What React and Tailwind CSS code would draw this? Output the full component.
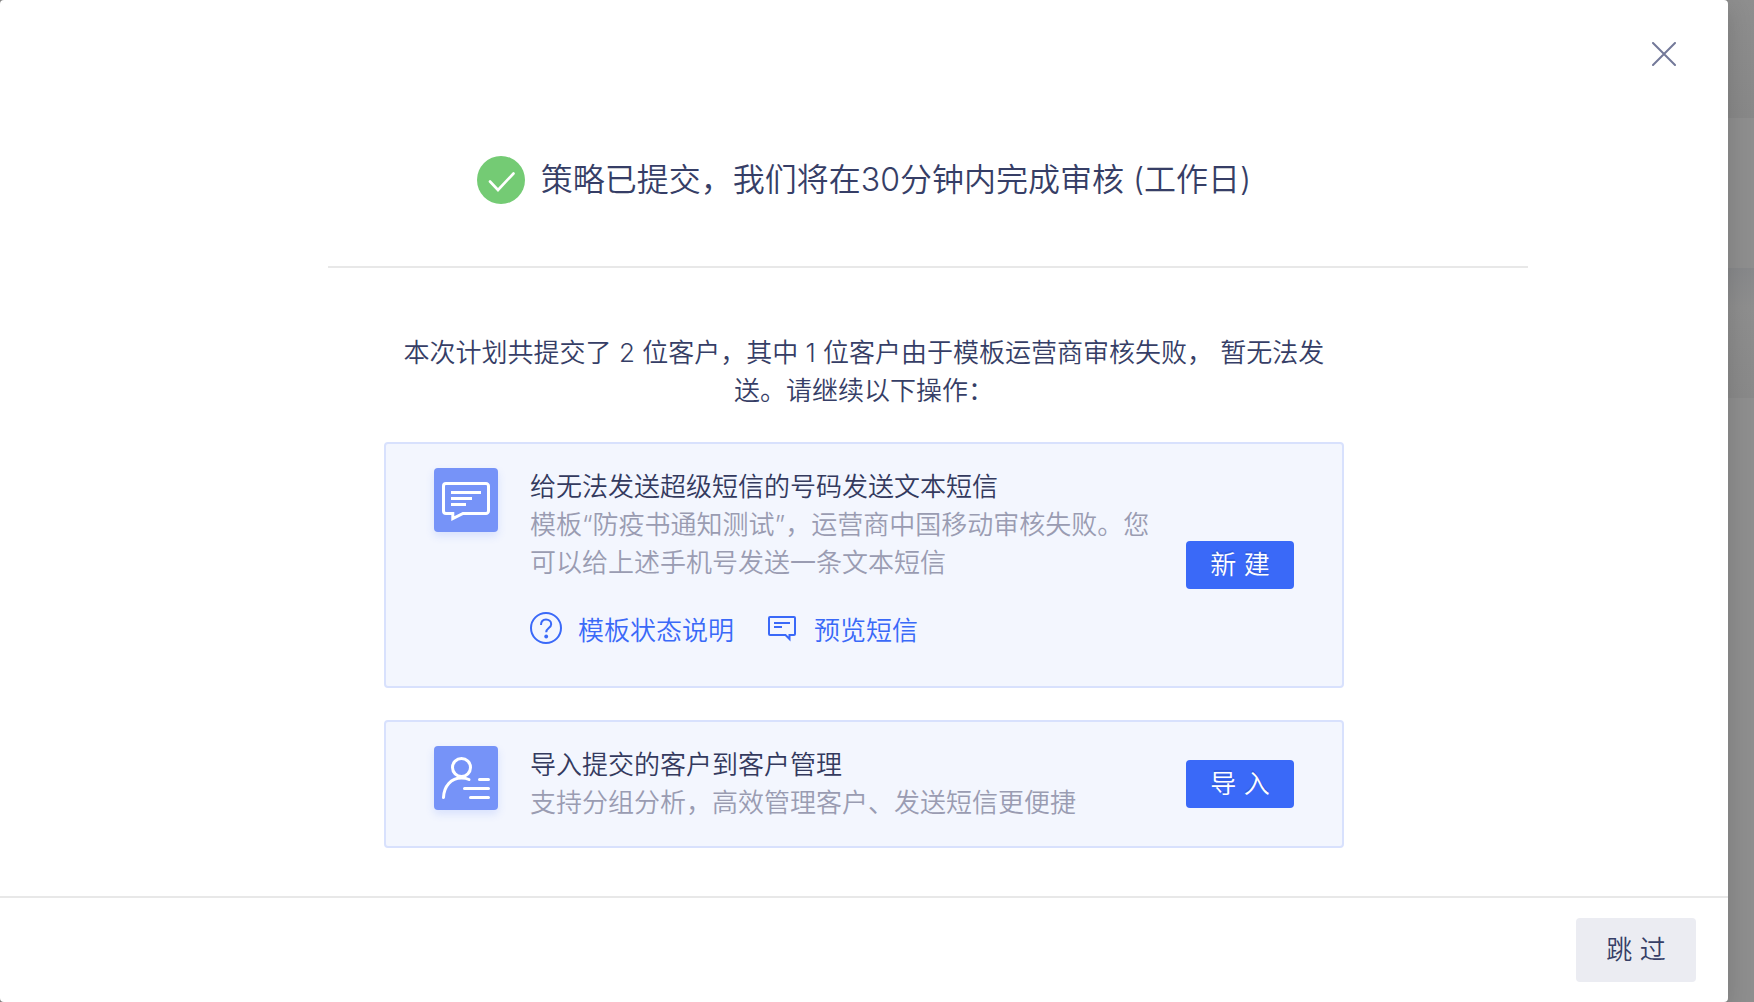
import React from 'react';

const CloseIcon = () => (
  <svg width="24" height="24" viewBox="0 0 24 24" fill="none" stroke="currentColor" strokeWidth="2" strokeLinecap="round">
    <path d="M1 1l22 22M23 1L1 23" />
  </svg>
);

const SuccessIcon = () => (
  <svg width="48" height="48" viewBox="0 0 48 48" fill="none" className="shrink-0">
    <circle cx="24" cy="24" r="24" fill="#74cb74" />
    <path d="M13 25.5l8 8.5L36.5 17.5" stroke="#fff" strokeWidth="2.6" strokeLinecap="round" />
  </svg>
);

const MessageIcon = () => (
  <svg width="64" height="64" viewBox="0 0 64 64" fill="none" stroke="#fff" strokeWidth="3">
    <path d="M12 15.5h40a2.5 2.5 0 0 1 2.5 2.5v25a2.5 2.5 0 0 1-2.5 2.5H29L18.8 50.5V45.5H12A2.5 2.5 0 0 1 9.5 43V18A2.5 2.5 0 0 1 12 15.5z" />
    <path d="M17 24.5h30M17 30.5h21M17 36.5h15" />
  </svg>
);

const CustomerIcon = () => (
  <svg width="64" height="64" viewBox="0 0 64 64" fill="none" stroke="#fff" strokeWidth="3" strokeLinecap="round">
    <circle cx="27.5" cy="21.5" r="9" />
    <path d="M9.5 51.5C10 40 17 32 27.5 32q4.500 0 7.500 1.500" />
    <path d="M45.5 33.5h9M30.5 42.5h24M36.5 51.5h18" />
  </svg>
);

const HelpIcon = () => (
  <svg width="32" height="32" viewBox="0 0 32 32" fill="none" stroke="currentColor" strokeWidth="2">
    <circle cx="16" cy="16" r="15" />
    <path d="M11 13c0-3.600 2.200-5.500 5-5.500s5.200 1.800 5.200 4.700c0 3.800-5 4-5 8" />
    <circle cx="16.200" cy="24.500" r="1.900" fill="currentColor" stroke="none" />
  </svg>
);

const PreviewIcon = () => (
  <svg width="28" height="26" viewBox="0 0 28 26" fill="none" stroke="currentColor" strokeWidth="2">
    <path d="M2 1h24a1 1 0 0 1 1 1v16a1 1 0 0 1-1 1h-4.500v4L17.500 19H2a1 1 0 0 1-1-1V2a1 1 0 0 1 1-1z" />
    <path d="M6 7h16M6 11h8" />
  </svg>
);

const ActionCard = ({ icon, title, description, action, children }) => (
  <section className="flex items-center gap-6 rounded border-2 border-[#d8e1fd] bg-[#f3f6fe] px-12 py-6">
    <div className="flex flex-1 items-start gap-8">
      <div className="shrink-0 rounded bg-[#7693f8] shadow-[0_4px_8px_rgba(58,105,248,0.15)]">{icon}</div>
      <div className="flex-1">
        <h2 className="text-[#343a5e]">{title}</h2>
        <p className="text-[#9a9cb2]">{description}</p>
        {children}
      </div>
    </div>
    <button
      type="button"
      className="h-12 w-[108px] shrink-0 rounded bg-[#3a69f8] text-white [text-shadow:0_-2px_0_rgba(0,0,0,0.12)]"
    >
      {action}
    </button>
  </section>
);

export default function App() {
  return (
    <div className="flex min-h-screen bg-[#868686] font-['Inter','Noto_Sans_CJK_SC',sans-serif] text-[26px] leading-[38px] font-[350] text-[#363e66]">
      <div role="dialog" aria-labelledby="dialog-title" className="relative z-10 flex flex-1 flex-col rounded bg-white shadow-[0_8px_24px_rgba(0,0,0,0.15)]">
        <button type="button" aria-label="关闭" className="absolute right-[52px] top-[42px] text-[#737999]">
          <CloseIcon />
        </button>

        <main className="flex-1 pb-12 pt-[156px]">
          <div className="flex items-center justify-center gap-4">
            <SuccessIcon />
            <h1 id="dialog-title" className="text-[32px] leading-[48px]">
              策略已提交，我们将在30分钟内完成审核 (工作日)
            </h1>
          </div>

          <hr className="ml-[328px] mr-[200px] mt-[62px] border-t-2 border-[#e8e8e8]" />

          <div className="mx-auto mt-[66px] flex max-w-[960px] flex-col gap-8">
            <p className="px-4 text-center">
              本次计划共提交了 2 位客户，其中 1 位客户由于模板运营商审核失败， 暂无法发送。请继续以下操作：
            </p>

            <ActionCard
              icon={<MessageIcon />}
              title="给无法发送超级短信的号码发送文本短信"
              description="模板“防疫书通知测试”，运营商中国移动审核失败。您可以给上述手机号发送一条文本短信"
              action="新 建"
            >
              <div className="mb-3 mt-[30px] flex gap-8 text-[#3a69f8]">
                <a href="#status" className="flex items-start gap-4">
                  <HelpIcon />
                  <span>模板状态说明</span>
                </a>
                <a href="#preview" className="flex items-start gap-4">
                  <span className="flex w-8 justify-center pt-1">
                    <PreviewIcon />
                  </span>
                  <span>预览短信</span>
                </a>
              </div>
            </ActionCard>

            <ActionCard
              icon={<CustomerIcon />}
              title="导入提交的客户到客户管理"
              description="支持分组分析，高效管理客户、发送短信更便捷"
              action="导 入"
            />
          </div>
        </main>

        <footer className="flex justify-end border-t-2 border-[#e8e8e8] px-8 py-5">
          <button type="button" className="h-16 w-[120px] rounded bg-[#ebecf2]">
            跳 过
          </button>
        </footer>
      </div>

      {/* dimmed page behind the dialog */}
      <div className="flex w-[26px] shrink-0 flex-col">
        <div className="h-[118px] bg-linear-to-b from-[#8e8e8e] to-[#888888]" />
        <div className="h-[150px] bg-[#8e8e8e]" />
        <div className="h-[130px] bg-linear-to-b from-[#87888a] via-[#8e8e8e] via-30% to-[#898989]" />
        <div className="flex-1 bg-[#8e8e8e]" />
      </div>
    </div>
  );
}
